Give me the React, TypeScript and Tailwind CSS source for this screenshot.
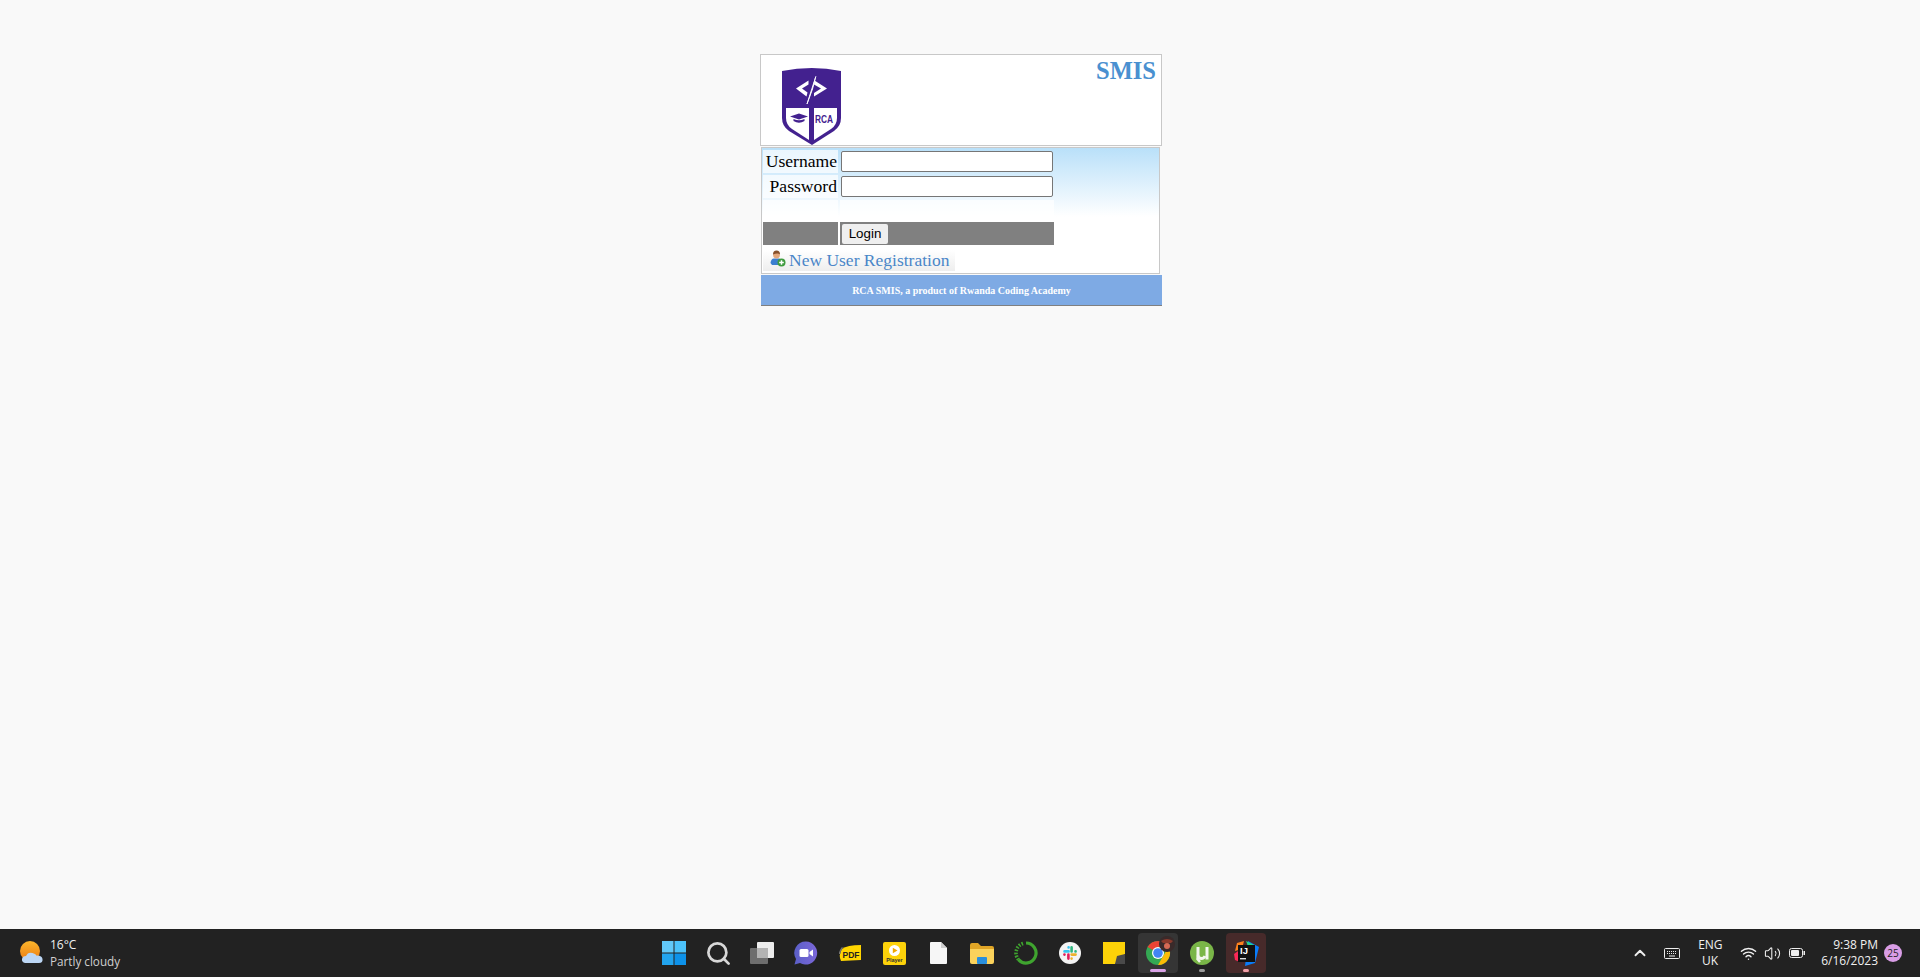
import { ChevronUp, Search, Volume2, Wifi } from "lucide-react";

// ==================== LOGIN PANEL ====================
const SERIF = "font-['Liberation_Serif','DejaVu_Serif',serif]";

function RcaLogo() {
  return (
    <svg width="59" height="77" viewBox="0 0 59 77">
      <path d="M0 3Q30-3 59 3V50Q59 58 52 63L30 77 7 63Q0 58 0 50Z" fill="#43218f" />
      <path d="M4 40H27V72L10 61Q4 57 4 50Z" fill="#fff" />
      <path d="M32 40H55V50Q55 57 49 61L32 72Z" fill="#fff" />
      <path d="M14 20.5 26.5 12.5V16.5L20 20.5 25.5 24.5 24.5 28.5Z" fill="#fff" />
      <path d="M45 20.5 32.5 12.5 32 16.5 39 20.5 32 25 32 28.5Z" fill="#fff" />
      <path d="M33.8 8.5 25 36 30.5 21Z" fill="#fff" stroke="#fff" strokeWidth="0.9" />
      <path d="M8 48.5 17 45.5 26 48.5 17 51.5Z" fill="#43218f" />
      <path d="M11.5 51Q17 53.5 22.5 51V53Q17 56.5 11.5 53Z" fill="#43218f" />
      <text x="33" y="55" fontSize="11" fontWeight="700" fontFamily="Liberation Sans, sans-serif" fill="#43218f" textLength="18" lengthAdjust="spacingAndGlyphs">
        RCA
      </text>
    </svg>
  );
}

function NewUserIcon() {
  return (
    <svg width="16" height="17" viewBox="0 0 16 17">
      <path d="M0.5 13Q1 8.5 4 8.5H9Q12 9 12 13L8 15H2Z" fill="#3b7fd0" />
      <circle cx="6.5" cy="5" r="3.4" fill="#e3a77c" />
      <path d="M3 4.5Q3 0.5 6.5 0.5T10 4.5Q8 2.5 3 4.5Z" fill="#87502b" />
      <circle cx="11.5" cy="12.5" r="4" fill="#3f9c3f" />
      <path d="M11.5 10.2V14.8M9.2 12.5H13.8" stroke="#fff" strokeWidth="1.5" />
    </svg>
  );
}

function LoginPanel() {
  return (
    <div className={`w-[402px] ${SERIF}`}>
      {/* Header */}
      <div className="flex h-[92px] justify-between border border-[#c8c8c8] bg-white">
        <div className="pl-[21px] pt-[13px]">
          <RcaLogo />
        </div>
        <h1 className="pr-[5px] pt-[1px] text-[24.5px] leading-[30px] font-bold text-[#4a90d0]">SMIS</h1>
      </div>

      {/* Form */}
      <div className="mt-[1px] mr-[2px] ml-[1px] flex h-[127px] flex-col border border-[#c8c8c8] bg-gradient-to-b from-[#b9e0f9] to-white to-[55%] py-[2px] pl-[1px] text-[17.6px] leading-[23px] text-black">
        <div className="flex h-[23px] gap-[2px]">
          <label className="w-[75px] bg-white/70 pr-[1px] text-right whitespace-nowrap">Username</label>
          <div className="w-[214px] pl-[1px] pt-[1px]">
            <input className="block h-[21px] w-[212px] rounded-[2px] border border-[#767676] bg-white" />
          </div>
        </div>
        <div className="mt-[2px] flex h-[23px] gap-[2px]">
          <label className="w-[75px] bg-white/70 pr-[1px] text-right whitespace-nowrap">Password</label>
          <div className="w-[214px] pl-[1px] pt-[1px]">
            <input className="block h-[21px] w-[212px] rounded-[2px] border border-[#767676] bg-white" />
          </div>
        </div>
        <div className="mt-[2px] flex h-[20px] gap-[2px]">
          <div className="w-[75px] bg-white/70" />
          <div className="w-[214px] bg-white/70" />
        </div>
        <div className="mt-[2px] flex h-[23px] gap-[2px]">
          <div className="w-[75px] bg-[#808080]" />
          <div className="flex w-[214px] items-center bg-[#808080] pl-[2px]">
            <button className="h-[20px] w-[46px] rounded-[2px] bg-[#efefef] font-['Liberation_Sans',sans-serif] text-[13.33px] leading-[20px] text-black">
              Login
            </button>
          </div>
        </div>
        <div className="mt-[5px] flex h-[21px] w-[192px] items-start bg-gradient-to-b from-white to-[#eeeeee] pl-[7px]">
          <NewUserIcon />
          <a className="ml-[3px] text-[17.5px] leading-[20px] whitespace-nowrap text-[#4a86c8]">New User Registration</a>
        </div>
      </div>

      {/* Footer */}
      <div className="mt-[1px] ml-[1px] flex h-[31px] items-center justify-center border-b border-[#808080] bg-[#7eaae4] text-[10px] font-bold text-white">
        RCA SMIS, a product of Rwanda Coding Academy
      </div>
    </div>
  );
}

// ==================== TASKBAR ICONS ====================
function WindowsIcon() {
  return (
    <svg width="24" height="24" viewBox="0 0 24 24">
      <path d="M0 0H11.5V11.5H0Z" fill="#62c8f8" />
      <path d="M12.5 0H24V11.5H12.5Z" fill="#4cc2fa" />
      <path d="M0 12.5H11.5V24H0Z" fill="#22a4ee" />
      <path d="M12.5 12.5H24V24H12.5Z" fill="#0d92ea" />
    </svg>
  );
}

function TaskViewIcon() {
  return (
    <svg width="24" height="22" viewBox="0 0 24 22">
      <rect x="7" y="0" width="17" height="16" rx="1" fill="#ededed" />
      <rect x="0" y="6" width="18" height="16" rx="1" fill="#6e6e6e" />
      <rect x="7" y="6" width="11" height="10" fill="#b3b3b3" />
    </svg>
  );
}

function MeetIcon() {
  return (
    <svg width="24" height="24" viewBox="0 0 24 24">
      <defs>
        <linearGradient id="meet" x1="0" y1="0" x2="1" y2="0">
          <stop offset="0" stopColor="#5b5fc7" />
          <stop offset="1" stopColor="#7b67d8" />
        </linearGradient>
      </defs>
      <path d="M12 0.5A11.5 11.5 0 1 1 6 22L0.5 23.5 2 18A11.5 11.5 0 0 1 12 0.5Z" fill="url(#meet)" />
      <rect x="5.5" y="8" width="9" height="8" rx="1.5" fill="#fff" />
      <path d="M15.5 11 19 8.5V15.5L15.5 13Z" fill="#fff" />
    </svg>
  );
}

function PdfIcon() {
  return (
    <svg width="22" height="16" viewBox="0 0 22 16">
      <path d="M3 4Q8 0 22 0V15L2 16Q-1 10 3 4Z" fill="#ffd500" />
      <path d="M3.5 2.5Q1 5 0.5 9" stroke="#777" strokeWidth="1.5" fill="none" />
      <text x="3.5" y="12.5" fontSize="9.5" fontWeight="700" fontFamily="Liberation Sans, sans-serif" fill="#222" textLength="17" lengthAdjust="spacingAndGlyphs">
        PDF
      </text>
    </svg>
  );
}

function PlayerIcon() {
  return (
    <svg width="23" height="23" viewBox="0 0 23 23">
      <rect width="23" height="23" rx="2" fill="#fdd20a" />
      <circle cx="11.5" cy="8.5" r="5.5" fill="#fff" />
      <path d="M9.8 5.8 14.5 8.5 9.8 11.2Z" fill="#f0a800" />
      <text x="11.5" y="20" textAnchor="middle" fontSize="5.5" fontWeight="700" fontFamily="Liberation Sans, sans-serif" fill="#333">
        Player
      </text>
    </svg>
  );
}

function FileIcon() {
  return (
    <svg width="17" height="22" viewBox="0 0 17 22">
      <path d="M1 0H11L17 6V21Q17 22 16 22H1Q0 22 0 21V1Q0 0 1 0Z" fill="#f6f6f6" />
      <path d="M11 0 17 6H11Z" fill="#cfcfcf" />
    </svg>
  );
}

function FolderIcon() {
  return (
    <svg width="24" height="21" viewBox="0 0 24 21">
      <path d="M0 2Q0 0 2 0H8L11 3H22Q24 3 24 5V8H0Z" fill="#e0a526" />
      <path d="M0 6H24V19Q24 21 22 21H2Q0 21 0 19Z" fill="#fbd25b" />
      <rect x="7" y="14" width="10" height="7" rx="1" fill="#2a8fdc" />
    </svg>
  );
}

function RingIcon() {
  return (
    <svg width="24" height="24" viewBox="0 0 24 24" fill="none">
      <path d="M12 2A10 10 0 1 1 4.5 18.6" stroke="#3fa42f" strokeWidth="3.2" />
      <path d="M4.5 18.6A10 10 0 0 1 10 2.2" stroke="#3fa42f" strokeWidth="3.6" strokeDasharray="1.6 1.4" />
    </svg>
  );
}

function SlackIcon() {
  return (
    <svg width="22" height="22" viewBox="0 0 22 22" strokeLinecap="round" strokeWidth="2.6">
      <circle cx="11" cy="11" r="11" fill="#f4f4f4" />
      <path d="M5.5 9.4H9.6M9.6 5.4V5.5" stroke="#36c5f0" />
      <path d="M12.6 9.4V5.4M16.5 9.4H16.6" stroke="#2eb67d" />
      <path d="M12.6 12.6H16.6M12.6 16.6V16.5" stroke="#ecb22e" />
      <path d="M9.4 12.6V16.6M5.4 12.6H5.5" stroke="#e01e5a" />
    </svg>
  );
}

function StickyIcon() {
  return (
    <svg width="22" height="22" viewBox="0 0 22 22">
      <path d="M0 0H22V12L12 22H0Z" fill="#fdd208" />
      <path d="M22 12V22H12L14 14Z" fill="#4a4a4a" />
    </svg>
  );
}

function ChromeIcon() {
  return (
    <svg width="40" height="40" viewBox="0 0 40 40">
      <circle cx="20" cy="20" r="12" fill="#34a853" />
      <path d="M20 8A12 12 0 0 1 30.4 14H20L14.8 17 9.6 14A12 12 0 0 1 20 8Z" fill="#ea4335" />
      <path d="M30.4 14A12 12 0 0 1 20 32L25.2 23Z" fill="#fbbc05" />
      <circle cx="20" cy="20" r="6" fill="#fff" />
      <circle cx="20" cy="20" r="4.8" fill="#4285f4" />
      <circle cx="29" cy="11" r="8" fill="#3a2a2a" />
      <path d="M23 8Q29 4 35 8L33 10H25Z" fill="#8c3a2c" />
      <circle cx="29" cy="13" r="3" fill="#d66a55" />
    </svg>
  );
}

function UTorrentIcon() {
  return (
    <svg width="24" height="24" viewBox="0 0 24 24" fill="none">
      <circle cx="12" cy="12" r="12" fill="#7ab648" />
      <path d="M8 6V14Q8 17.5 11.5 17.5 14 17.5 15 15" stroke="#f3f6ee" strokeWidth="3" />
      <path d="M17 6V18.5" stroke="#f3f6ee" strokeWidth="3" />
      <path d="M8 14 7.5 18 10 21" stroke="#f3f6ee" strokeWidth="2.5" />
    </svg>
  );
}

function IntelliJIcon() {
  return (
    <svg width="25" height="25" viewBox="0 0 25 25">
      <path d="M3 2 10 0 8 8 1 10Z" fill="#fc801d" />
      <path d="M0 13 7 8 6 21 1 19Z" fill="#fe2857" />
      <path d="M14 0 25 6 21 22 11 25Z" fill="#087cfa" />
      <path d="M12 0 20 4 16 10Z" fill="#21d789" />
      <rect x="4" y="4" width="17" height="17" fill="#111" />
      <text x="6" y="13" fontSize="9.5" fontWeight="700" fontFamily="Liberation Sans, sans-serif" fill="#fff">
        IJ
      </text>
      <rect x="6" y="17" width="6" height="1.4" fill="#ddd" />
    </svg>
  );
}

function WeatherIcon() {
  return (
    <svg width="23" height="24" viewBox="0 0 23 24">
      <defs>
        <linearGradient id="sun" x1="0" y1="0" x2="0" y2="1">
          <stop offset="0" stopColor="#fbb62c" />
          <stop offset="1" stopColor="#ec7a12" />
        </linearGradient>
      </defs>
      <circle cx="10" cy="10" r="10" fill="url(#sun)" />
      <path d="M5 22Q1.5 21 2 18T6 15Q8 10.5 12.5 12T16 14.5Q22 14 22.5 18T19 22Z" fill="#bcd6f4" />
    </svg>
  );
}

function KeyboardIcon() {
  return (
    <svg width="16" height="11" viewBox="0 0 16 11" fill="none" stroke="#eee">
      <rect x="0.5" y="0.5" width="15" height="10" rx="1" />
      <path d="M3 3.5H13M3 5.5H13" strokeDasharray="1 1" />
      <path d="M5 8H11" />
    </svg>
  );
}

function BatteryIcon() {
  return (
    <svg width="16" height="10" viewBox="0 0 16 10">
      <rect x="0.5" y="0.5" width="13" height="9" rx="2" fill="none" stroke="#eee" />
      <rect x="2" y="2" width="8" height="6" rx="1" fill="#eee" />
      <rect x="14.5" y="3" width="1.5" height="4" fill="#eee" />
    </svg>
  );
}

// ==================== TASKBAR ====================
function Taskbar() {
  return (
    <footer className="grid h-[48px] shrink-0 grid-cols-[1fr_auto_1fr] items-center bg-[#222222] font-['Open_Sans','Noto_Sans',sans-serif] text-[12px] text-[#f0f0f0]">
      {/* Weather */}
      <div className="flex items-center pl-[20px]">
        <WeatherIcon />
        <div className="ml-[7px] leading-[16px]">
          <div>16°C</div>
          <div className="text-[11.7px] text-[#d0d0d0]">Partly cloudy</div>
        </div>
      </div>

      {/* Pinned apps */}
      <div className="flex h-full items-center">
        <AppSlot><WindowsIcon /></AppSlot>
        <AppSlot><Search size={27} strokeWidth={2.4} color="#d8d8d8" /></AppSlot>
        <AppSlot><TaskViewIcon /></AppSlot>
        <AppSlot><MeetIcon /></AppSlot>
        <AppSlot><PdfIcon /></AppSlot>
        <AppSlot><PlayerIcon /></AppSlot>
        <AppSlot><FileIcon /></AppSlot>
        <AppSlot><FolderIcon /></AppSlot>
        <AppSlot><RingIcon /></AppSlot>
        <AppSlot><SlackIcon /></AppSlot>
        <AppSlot><StickyIcon /></AppSlot>
        <AppSlot bg="bg-[#353535]" dot="w-[16px] bg-[#d9a2e6]"><ChromeIcon /></AppSlot>
        <AppSlot dot="w-[6px] bg-[#9a9a9a]"><UTorrentIcon /></AppSlot>
        <AppSlot bg="bg-[#472a2a]" dot="w-[6px] bg-[#f2a0a8]"><IntelliJIcon /></AppSlot>
      </div>

      {/* System tray */}
      <div className="flex items-center justify-end">
        <ChevronUp size={18} strokeWidth={2.5} color="#eee" />
        <div className="ml-[15px]"><KeyboardIcon /></div>
        <div className="ml-[18px] w-[24px] text-center leading-[16px]">
          <div>ENG</div>
          <div>UK</div>
        </div>
        <Wifi size={17} className="ml-[18px]" />
        <Volume2 size={17} strokeWidth={1.5} className="ml-[7px]" />
        <div className="ml-[8px]"><BatteryIcon /></div>
        <div className="ml-[16px] text-right leading-[16px]">
          <div>9:38 PM</div>
          <div>6/16/2023</div>
        </div>
        <div className="mr-[18px] ml-[6px] flex h-[18px] w-[18px] items-center justify-center rounded-full bg-[#d99de6] text-[10px] text-[#222]">
          25
        </div>
      </div>
    </footer>
  );
}

interface AppSlotProps {
  children: React.ReactNode;
  bg?: string;
  dot?: string;
}

function AppSlot({ children, bg, dot }: AppSlotProps) {
  return (
    <div className="flex h-[40px] w-[44px] justify-center">
      <div className={`relative flex h-[40px] w-[40px] items-center justify-center rounded-[4px] ${bg ?? ""}`}>
        {children}
        {dot && <span className={`absolute bottom-[1px] h-[3px] rounded-full ${dot}`} />}
      </div>
    </div>
  );
}

// ==================== MAIN COMPONENT ====================
export default function App() {
  return (
    <div className="flex h-[977px] flex-col overflow-hidden bg-[#f9f9f9]">
      <main className="flex flex-1 justify-center pt-[54px] pl-[2px]">
        <LoginPanel />
      </main>
      <Taskbar />
    </div>
  );
}
